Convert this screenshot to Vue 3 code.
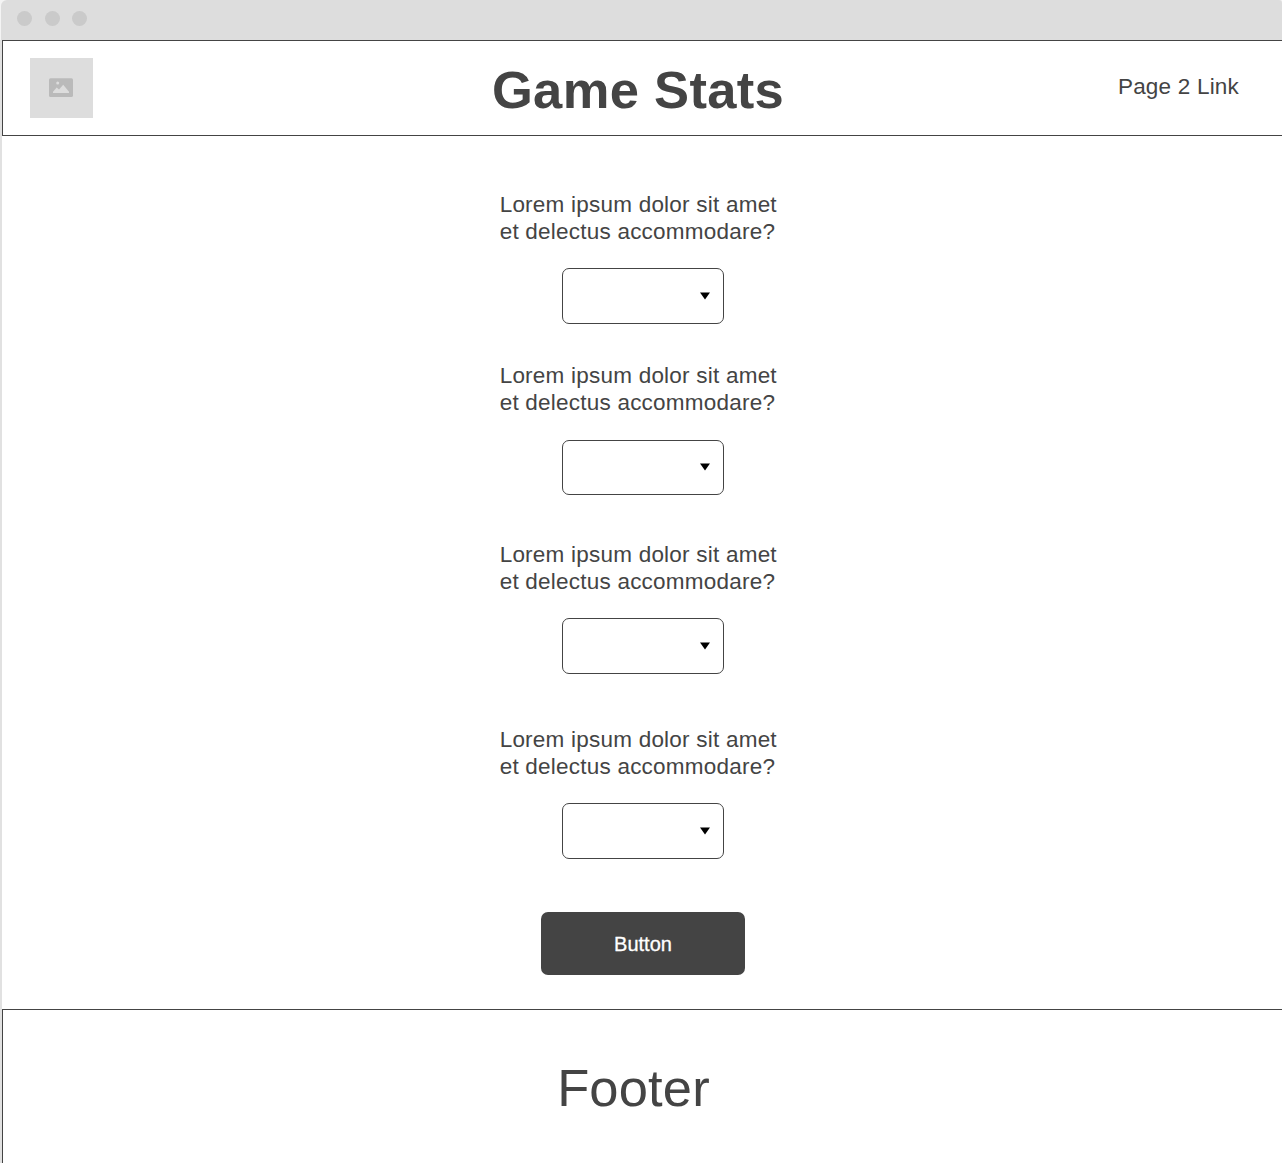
<script setup>
const questions = [
  { id: 1, offset: 0, gap: 23, height: 56 },
  { id: 2, offset: 38, gap: 24, height: 55 },
  { id: 3, offset: 46, gap: 23, height: 56 },
  { id: 4, offset: 52, gap: 23, height: 56 },
]
</script>

<template>
  <div class="window">
    <div class="titlebar">
      <span class="dot"></span>
      <span class="dot"></span>
      <span class="dot"></span>
    </div>
    <div class="page">
      <header class="header">
        <div class="logo">
          <svg width="24" height="19" viewBox="0 0 24 19">
            <rect y=".3" width="24" height="18.7" rx="1.6" fill="#bababa" />
            <circle cx="8.7" cy="5" r="1.5" fill="#ddd" />
            <path d="M4 15V13.8L7.7 9.4L10 11.6L14.2 6.8L20 13.8V15Z" fill="#ddd" />
          </svg>
        </div>
        <h1 class="title">Game Stats</h1>
        <a class="link">Page 2 Link</a>
      </header>
      <main class="main">
        <section
          v-for="q in questions"
          :key="q.id"
          class="question"
          :style="{ marginTop: q.offset + 'px', gap: q.gap + 'px' }"
        >
          <p class="prompt">Lorem ipsum dolor sit amet<br />et delectus accommodare?</p>
          <div class="select" :style="{ height: q.height + 'px' }">
            <svg width="10" height="8" viewBox="0 0 10 8"><path d="M0 .5H10L5 7.5Z" /></svg>
          </div>
        </section>
        <button class="button">Button</button>
      </main>
      <footer class="footer">Footer</footer>
    </div>
  </div>
</template>

<style>
body {
  background: #f4f4f4;
}
</style>

<style scoped>
.window {
  box-sizing: border-box;
  height: 1163px;
  overflow: hidden;
  display: flex;
  flex-direction: column;
  font-family: "Liberation Sans", Arial, sans-serif;
  color: #444;
}
.titlebar {
  box-sizing: border-box;
  height: 40px;
  flex: none;
  margin-left: 1px;
  padding: 11px 0 0 16px;
  display: flex;
  gap: 12.5px;
  background: #ddd;
  border-radius: 6px 3px 0 0;
}
.dot {
  width: 15px;
  height: 15px;
  border-radius: 50%;
  background: #cacaca;
}
.page {
  flex: 1;
  display: flex;
  flex-direction: column;
  border-left: 2px solid #e1e1e1;
  background: #fff;
}
.header {
  box-sizing: border-box;
  height: 96px;
  display: grid;
  grid-template-columns: 1fr auto 1fr;
  align-items: start;
  padding: 17px 43px 0 27px;
  border: 1px solid #444;
  border-right: 0;
}
.logo {
  width: 63px;
  height: 60px;
  display: flex;
  align-items: center;
  justify-content: center;
  background: #ddd;
}
.logo svg {
  margin: 0 1px 1px 0;
}
.title {
  margin: 1px 0 0 7px;
  font-size: 52.5px;
  line-height: 62px;
  font-weight: 700;
  letter-spacing: 0.32px;
}
.link {
  justify-self: end;
  margin-top: 15px;
  font-size: 22.5px;
  line-height: 27px;
  letter-spacing: 0.2px;
}
.main {
  flex: none;
  box-sizing: border-box;
  height: 873px;
  padding-top: 55px;
  display: flex;
  flex-direction: column;
  align-items: center;
}
.question {
  display: flex;
  flex-direction: column;
  align-items: center;
}
.prompt {
  margin: 0 7.5px 0 0;
  font-size: 22.5px;
  line-height: 27px;
  letter-spacing: 0.225px;
}
.select {
  box-sizing: border-box;
  width: 162px;
  margin-left: 2px;
  padding: 0 13px 0 0;
  display: flex;
  align-items: center;
  justify-content: flex-end;
  border: 1px solid #444;
  border-radius: 7px;
}
.select svg {
  margin-bottom: 1px;
}
.button {
  width: 204px;
  height: 63px;
  margin: 53px 0 0 2px;
  padding: 2px 0 0;
  border: 0;
  border-radius: 7px;
  background: #444;
  color: #fff;
  font: 20px "Liberation Sans", Arial, sans-serif;
  -webkit-text-stroke: 0.3px #fff;
}
.footer {
  flex: 1;
  padding: 47px 18px 0 0;
  border: solid #444;
  border-width: 1px 0 0 1px;
  font-size: 52.5px;
  line-height: 62px;
  letter-spacing: 0.16px;
  text-align: center;
}
</style>
